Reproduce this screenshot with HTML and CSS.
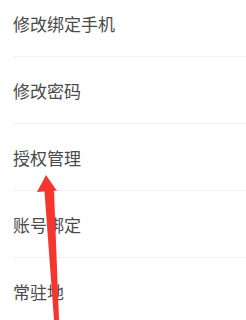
FILE: index.html
```html
<!DOCTYPE html>
<html lang="zh-CN">
<head>
  <meta charset="UTF-8">
  <title>账号设置</title>
  <link rel="stylesheet" href="styles.css">
</head>
<body>

  <!-- 设置列表 -->
  <ul class="setting-list">
    <li class="setting-item"><span>修改绑定手机</span></li>
    <li class="setting-item"><span>修改密码</span></li>
    <li class="setting-item"><span>授权管理</span></li>
    <li class="setting-item"><span>账号绑定</span></li>
    <li class="setting-item"><span>常驻地</span></li>
  </ul>

  <!-- 红色提示箭头 -->
  <svg class="hint-arrow" width="30" height="150" viewBox="0 0 30 150">
    <polygon points="11,0 22,16 19,15.5 24,145 19,145 9.5,16.5 2,17" fill="#f4362e"/>
  </svg>

</body>
</html>
```

FILE: styles.css
```css
body {
  margin: 0;
  padding: 0;
  background: #fff;
  font-family: "Noto Sans CJK SC", "Noto Sans", sans-serif;
  overflow: hidden;
}

/* 设置列表 */
.setting-list {
  list-style: none;
  margin: -10px 0 0 0;
  padding: 0 0 0 13px;
}
.setting-item {
  height: 66px;
  display: flex;
  align-items: center;
  border-bottom: 1px solid #f1f1f1;
  font-size: 17px;
  color: #4a4a4a;
}

/* 箭头 */
.hint-arrow {
  position: absolute;
  left: 35px;
  top: 175px;
}
```
